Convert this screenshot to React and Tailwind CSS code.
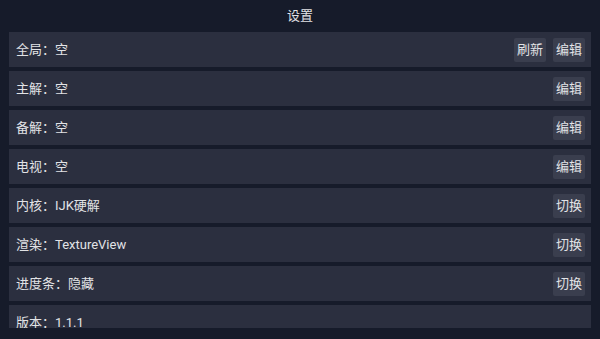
import React from 'react';

const rows = [
  { label: '全局：空', actions: ['刷新', '编辑'] },
  { label: '主解：空', actions: ['编辑'] },
  { label: '备解：空', actions: ['编辑'] },
  { label: '电视：空', actions: ['编辑'] },
  { label: '内核：IJK硬解', actions: ['切换'] },
  { label: '渲染：TextureView', actions: ['切换'] },
  { label: '进度条：隐藏', actions: ['切换'] },
  { label: '版本：1.1.1', actions: [] },
];

export default function App() {
  return (
    <div
      className="w-[600px] h-[339px] bg-[#161b2a] flex flex-col overflow-hidden text-[#e2e3e6]"
      style={{ fontFamily: 'Roboto, "Noto Sans CJK SC", sans-serif' }}
    >
      <div className="h-8 flex items-center justify-center text-[13px] shrink-0">设置</div>
      <div className="flex-1 min-h-0 overflow-hidden px-[9px] mb-[11px] flex flex-col gap-1">
        {rows.map((r) => (
          <div key={r.label} className="h-[35px] shrink-0 bg-[#2b2f3f] flex items-center pl-[7px] pr-[6px]">
            <span className="flex-1 text-[13px]">{r.label}</span>
            <div className="flex gap-[7px]">
              {r.actions.map((a) => (
                <button key={a} className="w-8 h-6 bg-[#3a3e4e] rounded-[2px] text-[13px] flex items-center justify-center text-[#e2e3e6]">
                  {a}
                </button>
              ))}
            </div>
          </div>
        ))}
      </div>
    </div>
  );
}
